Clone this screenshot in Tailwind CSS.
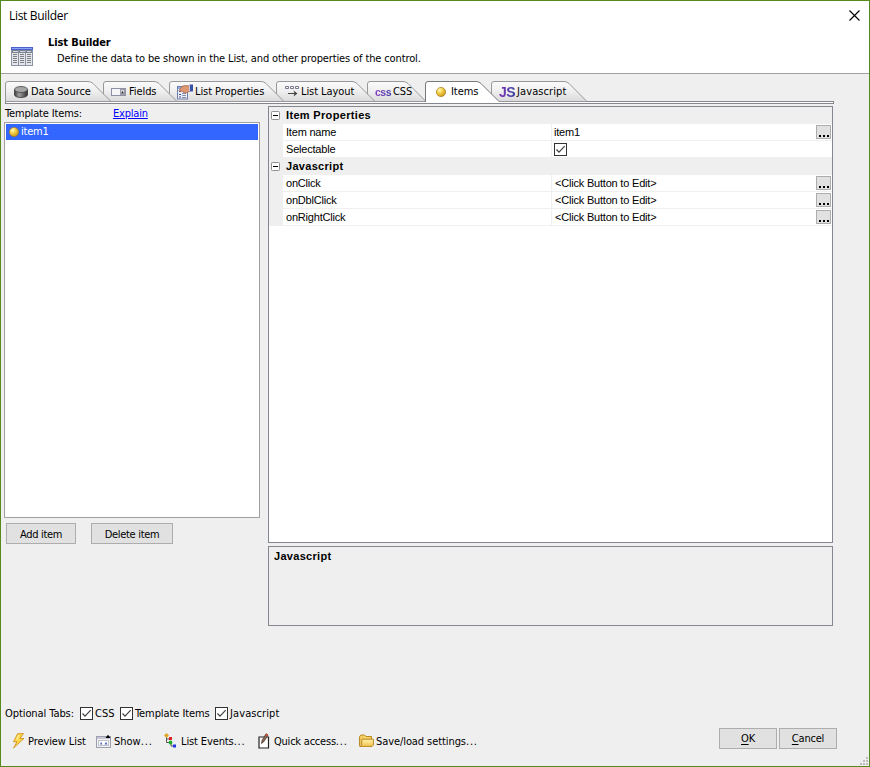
<!DOCTYPE html>
<html lang="en">
<head>
<meta charset="utf-8">
<title>List Builder</title>
<script src="https://cdn.jsdelivr.net/npm/@tailwindcss/browser@4"></script>
</head>
<body class="w-[870px] h-[767px] overflow-hidden">
<svg class="absolute w-0 h-0">
  <defs>
    <linearGradient id="tabg" x1="0" y1="0" x2="0" y2="1"><stop offset="0" stop-color="#fbfbfb"/><stop offset=".45" stop-color="#f0f0f0"/><stop offset="1" stop-color="#dadada"/></linearGradient>
    <radialGradient id="ball" cx=".35" cy=".3" r=".75"><stop offset="0" stop-color="#fff8c4"/><stop offset=".45" stop-color="#f3cf45"/><stop offset="1" stop-color="#c8951a"/></radialGradient>
    <linearGradient id="cyl" x1="0" x2="1"><stop offset="0" stop-color="#3c3c3c"/><stop offset=".35" stop-color="#a0a0a0"/><stop offset="1" stop-color="#303030"/></linearGradient>
    <linearGradient id="fold" x1="0" y1="0" x2="0" y2="1"><stop offset="0" stop-color="#fff3b0"/><stop offset="1" stop-color="#f2c14e"/></linearGradient>
    <symbol id="check" viewBox="0 0 13 13"><rect x=".5" y=".5" width="12" height="12" fill="#fff" stroke="#333"/><path d="M2.500 6.500 5 9.200 10.700 3.200" fill="none" stroke="#404040" stroke-width="1.200"/></symbol>
    <symbol id="minus" viewBox="0 0 9 9"><rect x=".5" y=".5" width="8" height="8" rx=".8" fill="#fff" stroke="#919191"/><path d="M2 4.500h5" stroke="#000"/></symbol>
    <symbol id="dot" viewBox="0 0 10 10"><circle cx="5" cy="5" r="4.600" fill="url(#ball)" stroke="#a87c1c" stroke-width=".7"/></symbol>
    <symbol id="dots" viewBox="0 0 15 14"><rect x=".5" y=".5" width="14" height="13" fill="#e1e1e1" stroke="#adadad"/><path d="M3 10h2v2H3zM7 10h2v2H7zM11 10h2v2h-2z"/></symbol>
  </defs>
</svg>
<div class="w-[870px] h-[767px] border border-[#578a1c] bg-[#efefef] flex flex-col text-black font-['DejaVu_Sans_Condensed','DejaVu_Sans',sans-serif] text-[11px] leading-[14px] whitespace-nowrap">

  <header class="h-[73px] shrink-0 bg-white border-b border-[#a0a0a0] flex flex-col">
    <div class="h-[29px] flex items-center justify-between pl-2 pr-[9px] font-['Open_Sans',sans-serif] text-[12px]">
      <span class="tracking-[-0.32px]">List Builder</span>
      <svg class="size-[11px]" viewBox="0 0 11 11"><path d="M.5.5l10 10M10.500.5l-10 10" stroke="#000" stroke-width="1.150"/></svg>
    </div>
    <div class="flex pl-[10px]">
      <svg class="w-[22px] h-[19px] mt-[17px]" viewBox="0 0 22 19">
        <path d="M0 0h22v19H0z" fill="#8c93a5"/><path d="M1 3h20v15H1z" fill="#e4e6ea"/>
        <path d="M0 0h22v3H0z" fill="#4a60cc"/><path d="M1 1h20v1H1z" fill="#8fa3f4"/>
        <path d="M1 3h20v3H1z" fill="#7d828f"/><path d="M2 4.500h5M9 4.500h5M16 4.500h4" stroke="#d2d6df"/>
        <path d="M7.500 3v15M14.500 3v15" stroke="#8b92a3"/>
        <path d="M2 7.500h4M2 9.500h4M2 11.500h4M2 13.500h4M2 15.500h4M9 7.500h4M9 9.500h4M9 11.500h4M9 13.500h4M9 15.500h4M16 7.500h4M16 9.500h4M16 11.500h4M16 13.500h4M16 15.500h4" stroke="#7c7f88"/>
      </svg>
      <div class="pl-[15px] pt-[6px]">
        <div class="font-bold h-4 tracking-[-0.1px]">List Builder</div>
        <div class="pl-[9px] tracking-[-0.125px]">Define the data to be shown in the List, and other properties of the control.</div>
      </div>
    </div>
  </header>

  <nav class="mt-[7px] ml-1 h-[23px] w-[829px] shrink-0 flex relative tracking-[-0.08px]">
    <div class="absolute left-0 top-[20px] w-[829px] h-[3px] bg-white border border-[#86878c]"></div>
    <div class="relative z-[7] w-[106px] -mr-2 h-[21px] flex items-center pl-[9px]">
      <svg class="absolute left-0 top-0 w-[106px] h-[21px]" viewBox="0 0 106 21"><path d="M.5 20.500V3Q.5.5 3 .5H83Q86 .5 88 2.500L106 20.500Z" fill="url(#tabg)" stroke="#98989c"/></svg>
      <svg class="relative w-[14px] h-[12px] mr-[3px]" viewBox="0 0 14 12"><path d="M.5 3.500v5C.5 10.500 3.500 11.500 7 11.500s6.500-1 6.500-3v-5z" fill="url(#cyl)" stroke="#333" stroke-width=".8"/><ellipse cx="7" cy="3.500" rx="6.500" ry="3" fill="#a6a6a6" stroke="#444" stroke-width=".8"/></svg>
      <span class="relative">Data Source</span>
    </div>
    <div class="relative z-[6] w-[74px] -mr-2 h-[21px] flex items-center pl-2">
      <svg class="absolute left-0 top-0 w-[74px] h-[21px]" viewBox="0 0 74 21"><path d="M.5 20.500V3Q.5.5 3 .5H51Q54 .5 56 2.500L74 20.500Z" fill="url(#tabg)" stroke="#98989c"/></svg>
      <svg class="relative w-[15px] h-[8px] mr-[3px]" viewBox="0 0 15 8"><rect x=".5" y=".5" width="14" height="7" fill="#f6f6f8" stroke="#8d8fa5"/><rect x="9.500" y="1.500" width="4" height="5" fill="#d5d5de" stroke="#9c9cab"/><path d="M10 5.500h3l-1.500-2.500z" fill="#333"/></svg>
      <span class="relative">Fields</span>
    </div>
    <div class="relative z-[5] w-[115px] -mr-2 h-[21px] flex items-center pl-2">
      <svg class="absolute left-0 top-0 w-[115px] h-[21px]" viewBox="0 0 115 21"><path d="M.5 20.500V3Q.5.5 3 .5H92Q95 .5 97 2.500L115 20.500Z" fill="url(#tabg)" stroke="#98989c"/></svg>
      <svg class="relative w-[16px] h-[16px] mr-[2px]" viewBox="0 0 16 16"><rect x=".5" y="2.500" width="10" height="12.500" fill="#e9edf7" stroke="#7080ac"/><path d="M1 3h9v2H1z" fill="#91a8e5"/><path d="M2 7.500h2M2 10.500h2M2 13h2" stroke="#3e5187"/><path d="M5 9.500h4M5 11.500h4M5 13.500h4" stroke="#8692ae"/><path d="M2 6.500 5 2.200 8.500 1.500 13 2v5l-3 1.500-3 .5-1.500-2L3 7.500z" fill="#df9672" stroke="#9d5e42" stroke-width=".7"/><path d="M12.500.5H16v7h-3.500z" fill="#3954a7"/><path d="M12.500 1v6" stroke="#c6cae4"/></svg>
      <span class="relative">List Properties</span>
    </div>
    <div class="relative z-[4] w-[99px] -mr-2 h-[21px] flex items-center pl-[9px]">
      <svg class="absolute left-0 top-0 w-[99px] h-[21px]" viewBox="0 0 99 21"><path d="M.5 20.500V3Q.5.5 3 .5H76Q79 .5 81 2.500L99 20.500Z" fill="url(#tabg)" stroke="#98989c"/></svg>
      <svg class="relative w-[14px] h-[11px] mr-[2px]" viewBox="0 0 14 11" fill="none"><path d="M.5.500h3v2h-3zM5.500.5h3v2h-3zM10.500.5h3v2h-3z" fill="#fff" stroke="#77778c"/><path d="M3 7.500h8" stroke="#444"/><path d="M8.500 4.500 12.500 7.500l-4 3 1-3z" fill="#444"/></svg>
      <span class="relative">List Layout</span>
    </div>
    <div class="relative z-[3] w-[66px] -mr-2 h-[21px] flex items-center pl-2">
      <svg class="absolute left-0 top-0 w-[66px] h-[21px]" viewBox="0 0 66 21"><path d="M.5 20.500V3Q.5.5 3 .5H36Q39 .5 41 2.500L59 20.500Z" fill="url(#tabg)" stroke="#98989c"/></svg>
      <span class="relative w-[18px] font-bold font-['Liberation_Sans',sans-serif] text-[10.5px] tracking-[-0.5px] bg-linear-to-r from-[#8a3fc0] to-[#3038a0] bg-clip-text text-transparent">css</span>
      <span class="relative">CSS</span>
    </div>
    <div class="relative z-[8] w-[74px] -mr-2 h-[22px] pb-px flex items-center pl-[11px]">
      <svg class="absolute left-0 top-0 w-[74px] h-[22px]" viewBox="0 0 74 22"><path d="M.5 21V3Q.5.5 3 .5H51Q54 .5 56 2.500L74 20.500V22H.5Z" fill="#fff"/><path d="M.5 21V3Q.5.5 3 .5H51Q54 .5 56 2.500L74 20.500" fill="none" stroke="#77777c"/></svg>
      <svg class="relative size-[10px] mr-[5px]"><use href="#dot"/></svg>
      <span class="relative">Items</span>
    </div>
    <div class="relative z-[1] w-[96px] h-[21px] flex items-center pl-2">
      <svg class="absolute left-0 top-0 w-[96px] h-[21px]" viewBox="0 0 96 21"><path d="M.5 20.500V3Q.5.5 3 .5H73Q76 .5 78 2.500L96 20.500Z" fill="url(#tabg)" stroke="#98989c"/></svg>
      <span class="relative w-[18px] font-bold font-['Liberation_Sans',sans-serif] text-[14px] tracking-[-0.5px] bg-linear-to-r from-[#8030b8] to-[#28409c] bg-clip-text text-transparent">JS</span>
      <span class="relative tracking-[0.1px]">Javascript</span>
    </div>
  </nav>

  <main class="flex h-[522px] mt-[2px] pl-[3px] shrink-0">
    <section class="w-[256px] mr-2">
      <div class="h-[16px] flex items-center pl-px"><span class="w-[108px] tracking-[-0.15px]">Template Items:</span><a class="text-[#0000ff] underline underline-offset-1 tracking-[-0.2px]">Explain</a></div>
      <div class="h-[396px] border border-[#a0a0a0] bg-white p-px">
        <div class="h-[16px] bg-[#3366ff] text-white flex items-center pl-[3px]"><svg class="size-[10px] mr-[2px]"><use href="#dot"/></svg><span class="tracking-[-0.2px]">item1</span></div>
      </div>
      <div class="flex pt-[5px] pl-[2px] gap-[15px] tracking-[-0.3px]">
        <button class="w-[70px] h-[21px] pt-[2px] border border-[#adadad] bg-[#e1e1e1]">Add item</button>
        <button class="w-[82px] h-[21px] pt-[2px] border border-[#adadad] bg-[#e1e1e1]">Delete item</button>
      </div>
    </section>
    <section class="w-[565px] font-['Liberation_Sans',sans-serif] leading-[16px] tracking-[-0.2px]">
      <div class="h-[437px] border border-[#828790] bg-white">
        <div class="h-[17px] bg-[#efefef] flex items-center pl-[2px] font-bold"><svg class="size-[9px] mr-[6px]"><use href="#minus"/></svg><span class="pb-[2px] tracking-[0.33px]">Item Properties</span></div>
        <div class="h-[17px] flex border-l-[14px] border-l-[#efefef]"><span class="w-[269px] pl-[3px] border-r border-b border-[#efefef]">Item name</span><div class="flex-1 pl-[2px] border-b border-[#efefef] flex justify-between"><span>item1</span><svg class="w-[15px] h-[14px] mr-px mt-px"><use href="#dots"/></svg></div></div>
        <div class="h-[17px] flex border-l-[14px] border-l-[#efefef]"><span class="w-[269px] pl-[3px] border-r border-b border-[#efefef]">Selectable</span><div class="flex-1 pl-[2px] border-b border-[#efefef] pt-[2px]"><svg class="size-[13px]"><use href="#check"/></svg></div></div>
        <div class="h-[17px] bg-[#efefef] flex items-center pl-[2px] font-bold"><svg class="size-[9px] mr-[6px]"><use href="#minus"/></svg><span class="pb-[2px] tracking-[0.3px]">Javascript</span></div>
        <div class="h-[17px] flex border-l-[14px] border-l-[#efefef]"><span class="w-[269px] pl-[3px] border-r border-b border-[#efefef]">onClick</span><div class="flex-1 pl-[3px] border-b border-[#efefef] flex justify-between"><span>&lt;Click Button to Edit&gt;</span><svg class="w-[15px] h-[14px] mr-px mt-px"><use href="#dots"/></svg></div></div>
        <div class="h-[17px] flex border-l-[14px] border-l-[#efefef]"><span class="w-[269px] pl-[3px] border-r border-b border-[#efefef]">onDblClick</span><div class="flex-1 pl-[3px] border-b border-[#efefef] flex justify-between"><span>&lt;Click Button to Edit&gt;</span><svg class="w-[15px] h-[14px] mr-px mt-px"><use href="#dots"/></svg></div></div>
        <div class="h-[17px] flex border-l-[14px] border-l-[#efefef]"><span class="w-[269px] pl-[3px] border-r border-b border-[#efefef]">onRightClick</span><div class="flex-1 pl-[3px] border-b border-[#efefef] flex justify-between"><span>&lt;Click Button to Edit&gt;</span><svg class="w-[15px] h-[14px] mr-px mt-px"><use href="#dots"/></svg></div></div>
      </div>
      <div class="mt-[3px] h-[80px] border border-[#828790] pl-[5px] pt-px font-bold tracking-[0.3px]">Javascript</div>
    </section>
  </main>

  <div class="mt-[76px] mb-px pl-[4px] h-[18px] flex items-center shrink-0">
    <span class="w-[75px] pt-[2px] tracking-[-0.08px]">Optional Tabs:</span>
    <label class="w-10 flex items-center gap-[2px]"><svg class="size-[13px]"><use href="#check"/></svg><span class="pt-[2px]">CSS</span></label>
    <label class="w-[95px] flex items-center gap-[2px] tracking-[-0.08px]"><svg class="size-[13px]"><use href="#check"/></svg><span class="pt-[2px]">Template Items</span></label>
    <label class="flex items-center gap-[2px] tracking-[0.1px]"><svg class="size-[13px]"><use href="#check"/></svg><span class="pt-[2px]">Javascript</span></label>
  </div>

  <footer class="flex-1 flex relative pl-[11px] pt-[4px]">
    <div class="h-[27px] flex items-center w-[84px] tracking-[-0.1px]">
      <svg class="w-[13px] h-[16px] mr-[3px]" viewBox="0 0 13 16"><path d="M5.500.8 11.500.5 8 5.500H12L1.500 15 5 8.800H1.500z" fill="#ffd54a" stroke="#d29222" stroke-width=".9"/><path d="M6.500 2 5 6.800" stroke="#fff4b5"/></svg><span class="pt-[2px]">Preview List</span>
    </div>
    <div class="h-[27px] flex items-center w-[68px]">
      <svg class="w-[15px] h-[14px] mr-[3px]" viewBox="0 0 15 14"><rect x=".5" y="2.500" width="14" height="11" fill="#f1f1f5" stroke="#9da0ac"/><path d="M1 3h13v2H1z" fill="#c5c8d2"/><path d="M9.500 4 12 .8 14.500 4z"/><rect x="2.500" y="6.500" width="10" height="5" fill="#fff" stroke="#c2c2cc"/><path d="M4 10.500 5 7.800l1.500 2.700zM8.500 10.500 10 7.800l1.500 2.700z" fill="#4266bd"/></svg><span class="pt-[2px]">Show<span class="tracking-[0.9px]">...</span></span>
    </div>
    <div class="h-[27px] flex items-center w-[94px]">
      <svg class="w-[13px] h-[15px] mr-[4px]" viewBox="0 0 13 15"><path d="M2.500 4v5.500H6M2.500 6H6M7 10v3h3" fill="none" stroke="#555"/><path d="M2.500 0 5 2.500 2.500 5 0 2.500z" fill="#e0a820"/><path d="M5 4h3v3H5z" fill="#e02222"/><circle cx="6.500" cy="9.500" r="1.900" fill="#1fae2c"/><path d="M9 11.500h3v3H9z" fill="#2338df"/></svg><span class="pt-[2px] tracking-[-0.12px]">List Events<span class="tracking-[0.8px]">...</span></span>
    </div>
    <div class="h-[27px] flex items-center w-[101px]">
      <svg class="w-[12px] h-[16px] mr-[4px]" viewBox="0 0 12 16"><path d="M1 4h9.500v11H1z" fill="#fff" stroke="#222" stroke-width="1.200"/><path d="M3.500 10.500 4 7.500 8 .8 10 2 6 8.500z" fill="#8f6a50" stroke="#3d302b" stroke-width=".7"/><path d="M7.200 2 8.100.5l2 1.200-.9 1.500z" fill="#cf4f36"/></svg><span class="pt-[2px] tracking-[-0.22px]">Quick access<span class="tracking-[0.8px]">...</span></span>
    </div>
    <div class="h-[27px] flex items-center">
      <svg class="w-[15px] h-[13px] mr-[2px]" viewBox="0 0 15 13"><path d="M.6 11V2.500L2 1h3.500L7 2.500h5.500V5" fill="#f5cf65" stroke="#b98a20"/><path d="M.6 12V3" stroke="#b98a20"/><path d="M3 5.200h11.400V11l-1.300 1.400H.7L2.600 11z" fill="url(#fold)" stroke="#b98a20"/></svg><span class="pt-[2px] tracking-[-0.08px]">Save/load settings<span class="tracking-[0.8px]">...</span></span>
    </div>
    <div class="absolute left-[718px] top-[5px] flex gap-[2px] tracking-[-0.2px]">
      <button class="w-[58px] h-[21px] border border-[#adadad] bg-[#e1e1e1]"><span class="underline underline-offset-2">O</span>K</button>
      <button class="w-[58px] h-[21px] border border-[#adadad] bg-[#e1e1e1]"><span class="underline underline-offset-2">C</span>ancel</button>
    </div>
    <svg class="absolute right-[1px] bottom-[1px] w-[8px] h-[8px]" viewBox="0 0 8 8"><path d="M6 0h2v2H6zM3 3h2v2H3zM6 3h2v2H6zM0 6h2v2H0zM3 6h2v2H3zM6 6h2v2H6z" fill="#bdbdbd"/></svg>
  </footer>
</div>
</body>
</html>
